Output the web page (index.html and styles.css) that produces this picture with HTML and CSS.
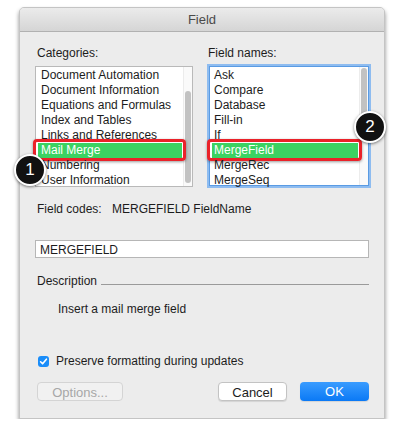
FILE: index.html
```html
<!DOCTYPE html>
<html lang="en">
<head>
    <meta charset="UTF-8">
    <meta name="viewport" content="width=device-width, initial-scale=1.0">
    <title>Field</title>
    <link rel="stylesheet" href="styles.css">
</head>
<body>
    <div class="window">
        <div class="titlebar">Field</div>
        <div class="content">
            <div class="columns">
                <div class="column categories">
                    <div class="label">Categories:</div>
                    <div class="listbox">
                        <div class="items">
                            <div class="item">Document Automation</div>
                            <div class="item">Document Information</div>
                            <div class="item">Equations and Formulas</div>
                            <div class="item">Index and Tables</div>
                            <div class="item">Links and References</div>
                            <div class="item selected">Mail Merge<span class="callout"></span></div>
                            <div class="item">Numbering</div>
                            <div class="item">User Information</div>
                        </div>
                        <div class="track"><div class="thumb"></div></div>
                    </div>
                </div>
                <div class="column names">
                    <div class="label">Field names:</div>
                    <div class="listbox focused">
                        <div class="items">
                            <div class="item">Ask</div>
                            <div class="item">Compare</div>
                            <div class="item">Database</div>
                            <div class="item">Fill-in</div>
                            <div class="item">If</div>
                            <div class="item selected">MergeField<span class="callout"></span></div>
                            <div class="item">MergeRec</div>
                            <div class="item">MergeSeq</div>
                        </div>
                        <div class="track"><div class="thumb"></div></div>
                    </div>
                </div>
            </div>

            <div class="codes">
                <span class="codes-label">Field codes:</span>
                <span>MERGEFIELD FieldName</span>
            </div>

            <div class="code-input">MERGEFIELD</div>

            <div class="group-title">
                <span>Description</span>
                <span class="rule"></span>
            </div>
            <div class="description">Insert a mail merge field</div>

            <div class="check">
                <span class="box">
                    <svg width="11" height="11" viewBox="0 0 11 11">
                        <path d="M2.6 5.8 L4.6 7.8 L8.4 3.2" fill="none" stroke="#fff" stroke-width="1.6" stroke-linecap="round" stroke-linejoin="round"/>
                    </svg>
                </span>
                Preserve formatting during updates
            </div>

            <div class="buttons">
                <div class="button disabled">Options...</div>
                <div class="spacer"></div>
                <div class="button">Cancel</div>
                <div class="button primary">OK</div>
            </div>
        </div>

        <div class="badge badge-one">1</div>
        <div class="badge badge-two">2</div>
    </div>
</body>
</html>
```

FILE: styles.css
```css
body {
    margin: 0;
    padding: 7px 0 0 19px;
    background-color: #fff;
    font-family: "Liberation Sans", Arial, sans-serif;
    font-size: 12px;
    color: #1c1c1c;
}

.window {
    position: relative;
    width: 366px;
    height: 412px;
    box-sizing: border-box;
    background-color: #ececec;
    border: 1px solid #c4c4c4;
    border-radius: 5px 5px 0 0;
    box-shadow: 0 3px 4px rgba(0, 0, 0, 0.45);
}

.titlebar {
    height: 23px;
    line-height: 23px;
    text-align: center;
    font-size: 13px;
    color: #4a4a4a;
    background: linear-gradient(#ebebeb, #d5d5d5);
    border-bottom: 1px solid #b1b1b1;
    border-radius: 4px 4px 0 0;
}

.content {
    padding: 14px 13px 0 15px;
}

.columns {
    display: flex;
    justify-content: space-between;
}

.column.categories {
    width: 158px;
}

.column.names {
    width: 164px;
}

.label {
    height: 14px;
    line-height: 14px;
    padding-left: 2px;
    margin-bottom: 6px;
}

.column.names .label {
    padding-left: 1px;
}

.listbox {
    display: flex;
    height: 121px;
    background-color: #fff;
    border: 1px solid #b9b9b9;
    box-sizing: border-box;
}

.listbox.focused {
    border-color: #5a9be3;
    box-shadow: 0 0 0 2px #8ebcf0;
    margin-top: 1px;
    margin-left: 2px;
    margin-right: 2px;
    height: 120px;
}

.items {
    flex: 1;
    padding-top: 1px;
}

.item {
    position: relative;
    height: 15px;
    line-height: 15px;
    padding-left: 5px;
    white-space: nowrap;
}

.listbox.focused .item {
    padding-left: 4px;
}

.item.selected {
    background-color: #3bd262;
    color: #fff;
    margin-left: 2px;
    margin-right: 1px;
    padding-left: 3px;
}

.listbox.focused .item.selected {
    padding-left: 2px;
}

.callout {
    position: absolute;
    left: -5px;
    right: -4px;
    top: -4px;
    bottom: -3px;
    border: 3px solid #ea2229;
    border-radius: 4px;
    box-shadow: 0 1px 3px rgba(0, 0, 0, 0.4);
}

.track {
    width: 8px;
    border-left: 1px solid #ececec;
    background-color: #fafafa;
}

.thumb {
    width: 6px;
    margin-left: 1px;
    background-color: #c2c2c2;
    border-radius: 3px;
}

.categories .thumb {
    margin-top: 24px;
    height: 92px;
}

.names .thumb {
    margin-top: 1px;
    height: 48px;
}

.codes {
    display: flex;
    height: 14px;
    line-height: 14px;
    margin-top: 15px;
    padding-left: 2px;
}

.codes-label {
    width: 75px;
}

.code-input {
    margin-top: 24px;
    margin-right: 2px;
    height: 18px;
    line-height: 18px;
    padding-left: 4px;
    background-color: #fff;
    border: 1px solid #b6b6b6;
    box-sizing: border-box;
    font-size: 12px;
}

.group-title {
    display: flex;
    align-items: center;
    margin-top: 16px;
    margin-right: 2px;
    height: 14px;
    padding-left: 2px;
}

.rule {
    flex: 1;
    height: 1px;
    margin-left: 4px;
    margin-top: 6px;
    background-color: #9a9a9a;
}

.description {
    height: 14px;
    line-height: 14px;
    margin-top: 14px;
    padding-left: 23px;
}

.check {
    display: flex;
    align-items: center;
    margin-top: 38px;
    height: 14px;
    padding-left: 3px;
}

.box {
    width: 11px;
    height: 11px;
    margin-right: 7px;
    background-color: #1a8df9;
    border-radius: 3px;
}

.box svg {
    display: block;
}

.buttons {
    display: flex;
    margin-top: 14px;
    margin-right: 2px;
}

.spacer {
    flex: 1;
}

.button {
    height: 19px;
    line-height: 19px;
    text-align: center;
    font-size: 13px;
    border-radius: 4px;
    box-sizing: border-box;
    background-color: #fff;
    border: 1px solid #c3c3c3;
    box-shadow: 0 1px 1px rgba(0, 0, 0, 0.1);
}

.button.disabled {
    width: 86px;
    margin-left: 2px;
    color: #a7a7a7;
    background-color: #f1f1f1;
    border-color: #d4d4d4;
    box-shadow: none;
}

.button + .button.primary,
.spacer + .button {
    width: 69px;
}

.button.primary {
    margin-left: 13px;
    color: #fff;
    border: none;
    background: linear-gradient(#3a9cff, #0a79f5);
}

.badge {
    position: absolute;
    width: 28px;
    height: 28px;
    line-height: 28px;
    text-align: center;
    border-radius: 50%;
    background-color: #111;
    color: #fff;
    font-size: 17px;
    border: 2px solid #fff;
    box-shadow: 0 1px 3px rgba(0, 0, 0, 0.5);
}

.badge-one {
    left: -6px;
    top: 146px;
}

.badge-two {
    left: 334px;
    top: 103px;
}
```
